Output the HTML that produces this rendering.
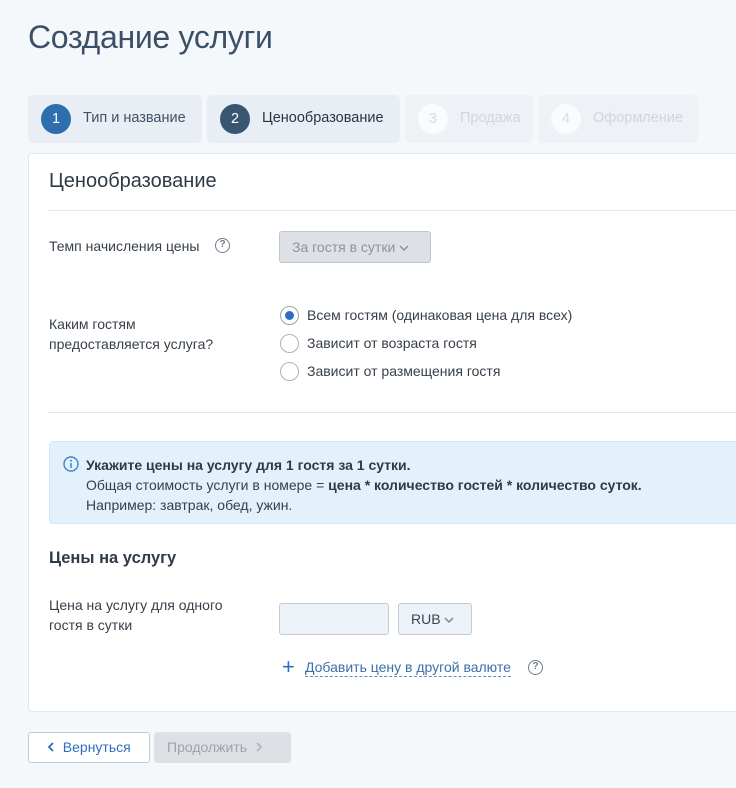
<!DOCTYPE html>
<html><head><meta charset="utf-8"><style>
*{box-sizing:border-box;margin:0;padding:0}
body{width:736px;height:788px;overflow:hidden;background:#f5f8fb;font-family:"Liberation Sans",sans-serif;color:#37404a;font-size:14px;position:relative}
.a{position:absolute;white-space:nowrap}
h1{position:absolute;left:28px;top:19px;font-size:32px;font-weight:normal;color:#3b5068;letter-spacing:-0.3px}
.step{position:absolute;top:95px;height:48px;border-radius:5px;background:#e9eef4;font-size:14.5px}
.step .n{position:absolute;left:13px;top:9px;width:30px;height:30px;border-radius:50%;text-align:center;line-height:30px;color:#fff}
.step .t{position:absolute;left:55px;top:15px}
.card{position:absolute;left:28px;top:153px;width:720px;height:559px;background:#fff;border:1px solid #e1e7ee;border-radius:4px}
.hr{position:absolute;left:48px;width:700px;height:1px;background:#e1e7ee}
.rad{position:absolute;left:280px;width:19px;height:19px;border-radius:50%;border:1px solid #a9b4bf;background:#fff}
.q{position:absolute;width:15px;height:15px;border:1.5px solid #6f7c89;border-radius:50%;font-size:10px;text-align:center;line-height:12px;color:#6f7c89;font-weight:bold}
svg{display:inline-block}
</style></head><body>
<h1>Создание услуги</h1>
<div class="step" style="left:28px;width:174px"><div class="n" style="background:#2e6ead">1</div><div class="t" style="color:#3f5165">Тип и название</div></div>
<div class="step" style="left:207px;width:193px"><div class="n" style="background:#3a5572">2</div><div class="t" style="color:#2a3440">Ценообразование</div></div>
<div class="step" style="left:405px;width:128px;background:#eef2f6"><div class="n" style="background:#fafbfc;color:#d8dde3">3</div><div class="t" style="color:#cfd6de">Продажа</div></div>
<div class="step" style="left:538px;width:160px;background:#eef2f6"><div class="n" style="background:#fafbfc;color:#d8dde3">4</div><div class="t" style="color:#cfd6de">Оформление</div></div>
<div class="card"></div>
<div class="a" style="left:49px;top:170px;font-size:20px;color:#2f3a46">Ценообразование</div>
<div class="hr" style="top:210px"></div>
<div class="a" style="left:49px;top:238px">Темп начисления цены</div>
<div class="q" style="left:215px;top:238px">?</div>
<div class="a" style="left:279px;top:231px;width:152px;height:32px;background:#dde1e6;border:1px solid #bfc6ce;border-radius:3px;color:#8a949e;padding:7px 0 0 12px">За гостя в сутки <svg width="10" height="8" viewBox="0 0 10 8"><path d="M1 2l4 4 4-4" fill="none" stroke="#8a949e" stroke-width="1.5"/></svg></div>
<div class="a" style="left:49px;top:314px;line-height:20px;white-space:normal;width:200px">Каким гостям<br>предоставляется услуга?</div>
<div class="rad" style="top:306px;border-color:#95a3b1"><div style="position:absolute;left:4px;top:4px;width:9px;height:9px;border-radius:50%;background:#2e6ec2"></div></div>
<div class="rad" style="top:334px"></div>
<div class="rad" style="top:362px"></div>
<div class="a" style="left:307px;top:307px">Всем гостям (одинаковая цена для всех)</div>
<div class="a" style="left:307px;top:335px">Зависит от возраста гостя</div>
<div class="a" style="left:307px;top:363px">Зависит от размещения гостя</div>
<div class="hr" style="top:412px"></div>
<div class="a" style="left:49px;top:441px;width:700px;height:83px;background:#e3f1fc;border:1px solid #d3e6f6;border-radius:4px"></div>
<svg class="a" style="left:63px;top:456px" width="16" height="16" viewBox="0 0 16 16"><circle cx="8" cy="8" r="7" fill="none" stroke="#3a86d0" stroke-width="1.4"/><circle cx="8" cy="4.8" r="1" fill="#3a86d0"/><path d="M8 7v5" stroke="#3a86d0" stroke-width="1.5"/></svg>
<div class="a" style="left:86px;top:455px;line-height:20px;font-size:14px"><b style="color:#2f3a46">Укажите цены на услугу для 1 гостя за 1 сутки.</b><br>Общая стоимость услуги в номере = <b style="color:#2f3a46">цена * количество гостей * количество суток.</b><br>Например: завтрак, обед, ужин.</div>
<div class="a" style="left:49px;top:549px;font-size:16.5px;font-weight:bold;color:#2f3a46">Цены на услугу</div>
<div class="a" style="left:49px;top:595px;line-height:20px">Цена на услугу для одного<br>гостя в сутки</div>
<div class="a" style="left:279px;top:603px;width:110px;height:32px;background:#edf2f8;border:1px solid #c2ccd6;border-radius:3px"></div>
<div class="a" style="left:398px;top:603px;width:74px;height:32px;background:#edf2f8;border:1px solid #c2ccd6;border-radius:3px;padding:7px 0 0 12px;color:#3b4652">RUB <svg width="10" height="8" viewBox="0 0 10 8"><path d="M1 2l4 4 4-4" fill="none" stroke="#7a8591" stroke-width="1.5"/></svg></div>
<div class="a" style="left:282px;top:656px;font-size:22px;color:#2e6ec2;line-height:22px">+</div>
<div class="a" style="left:305px;top:659px;color:#3b6fa8;border-bottom:1px dashed #5b8dc6;line-height:17px">Добавить цену в другой валюте</div>
<div class="q" style="left:528px;top:660px">?</div>
<div class="a" style="left:28px;top:732px;width:122px;height:31px;background:#fff;border:1px solid #c2ccd6;border-radius:3px;color:#2e6ec2;padding:6px 0 0 18px"><svg width="8" height="10" viewBox="0 0 8 10"><path d="M6 1L2 5l4 4" fill="none" stroke="#2e6ec2" stroke-width="1.8"/></svg>&nbsp; Вернуться</div>
<div class="a" style="left:154px;top:732px;width:137px;height:31px;background:#dde1e6;border-radius:3px;color:#9aa3ad;padding:7px 0 0 13px">Продолжить &nbsp;<svg width="8" height="10" viewBox="0 0 8 10"><path d="M2 1l4 4-4 4" fill="none" stroke="#b0b8c0" stroke-width="1.8"/></svg></div>
</body></html>
